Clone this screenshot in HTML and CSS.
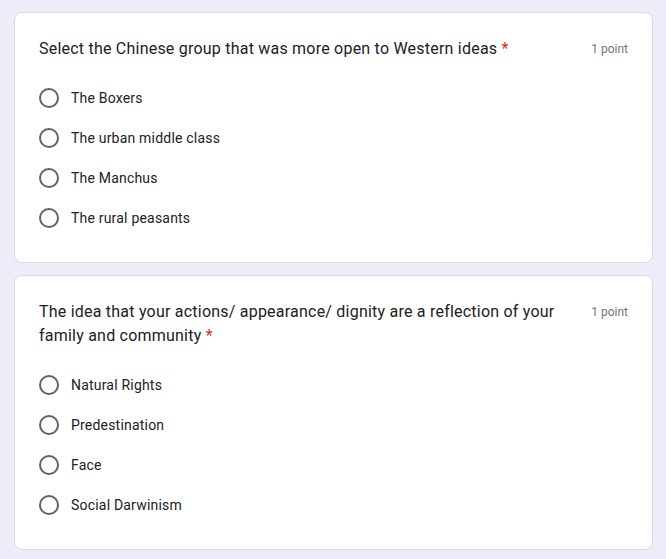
FILE: index.html
```html
<!DOCTYPE html>
<html>
<head>
<meta charset="utf-8">
<link rel="stylesheet" href="styles.css">
</head>
<body>
<div class="page">
  <div class="card">
    <div class="head">
      <div class="title">Select the Chinese group that was more open to Western ideas <span class="req">*</span></div>
      <div class="points">1 point</div>
    </div>
    <div class="options">
      <label class="opt"><span class="radio"></span><span class="txt">The Boxers</span></label>
      <label class="opt"><span class="radio"></span><span class="txt">The urban middle class</span></label>
      <label class="opt"><span class="radio"></span><span class="txt">The Manchus</span></label>
      <label class="opt"><span class="radio"></span><span class="txt">The rural peasants</span></label>
    </div>
  </div>
  <div class="card">
    <div class="head">
      <div class="title">The idea that your actions/ appearance/ dignity are a reflection of your family and community <span class="req">*</span></div>
      <div class="points">1 point</div>
    </div>
    <div class="options">
      <label class="opt"><span class="radio"></span><span class="txt">Natural Rights</span></label>
      <label class="opt"><span class="radio"></span><span class="txt">Predestination</span></label>
      <label class="opt"><span class="radio"></span><span class="txt">Face</span></label>
      <label class="opt"><span class="radio"></span><span class="txt">Social Darwinism</span></label>
    </div>
  </div>
</div>
</body>
</html>
```
FILE: styles.css
```css
html, body {
  margin: 0;
  padding: 0;
  background: #f0ebf8;
}
body {
  font-family: Roboto, "Liberation Sans", Arial, sans-serif;
  color: #202124;
}
.page {
  padding: 12px 13px 0 14px;
  display: flex;
  flex-direction: column;
  gap: 12px;
}
.card {
  background: #fff;
  border: 1px solid #dadce0;
  border-radius: 8px;
  padding: 24px 24px 24px 24px;
}
.head {
  display: flex;
  align-items: flex-start;
  gap: 24px;
}
.title {
  flex: 1;
  font-size: 16px;
  line-height: 24px;
  letter-spacing: 0.22px;
  color: #202124;
}
.req {
  color: #d93025;
}
.points {
  font-size: 12px;
  line-height: 24px;
  color: #70757a;
  white-space: nowrap;
}
.options {
  margin-top: 17px;
  display: flex;
  flex-direction: column;
}
.opt {
  display: flex;
  align-items: center;
  height: 40px;
  gap: 12px;
}
.radio {
  width: 20px;
  height: 20px;
  box-sizing: border-box;
  border: 2px solid #5f6368;
  border-radius: 50%;
  flex: none;
}
.txt {
  font-size: 14px;
  letter-spacing: 0.2px;
  color: #202124;
}
```
